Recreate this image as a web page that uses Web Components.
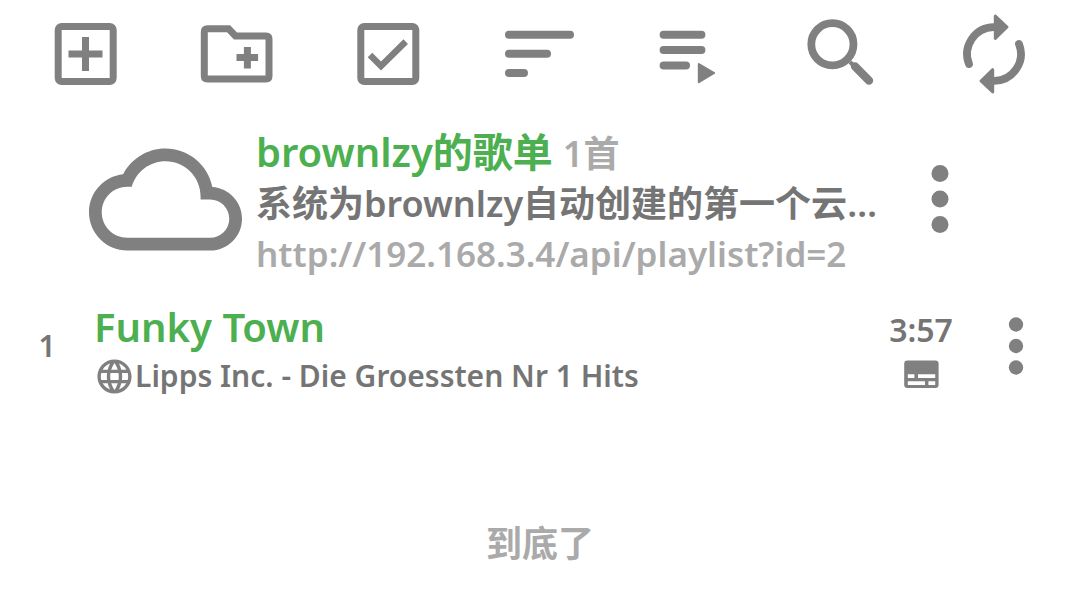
<!DOCTYPE html>
<html lang="zh-CN">
<head>
<meta charset="utf-8">
<meta name="viewport" content="width=device-width, initial-scale=1">
<title>brownlzy的歌单</title>
<style>
  body {
    margin: 0;
    background: #fff;
    color: #757575;
    font-family: "Noto Sans", "Noto Sans CJK SC", sans-serif;
    font-weight: 600;
  }
</style>
</head>
<body>
<playlist-page></playlist-page>

<script>
const ICONS = {
  add: ['0 0 82 82', `<g fill="none" stroke="currentColor" stroke-width="7"><rect x="13.2" y="13.4" width="55" height="55" rx="3.4"/><path d="M23.5 41h34M40.5 24v34"/></g>`],
  folder: ['0 0 82 82', `<g fill="none" stroke="currentColor" stroke-width="7"><path d="M11.5 15.8H32.6L39.5 23H70Q73 23 73 26V63Q73 66 70 66H11.5Q8.3 66 8.3 63V19Q8.3 15.8 11.5 15.8Z"/><path d="M40.5 44.6h21.6M51.4 34v21.4"/></g>`],
  check: ['0 0 82 82', `<g fill="none" stroke="currentColor" stroke-width="7"><rect x="12.8" y="13.4" width="55" height="55" rx="3.4"/><path stroke-width="6.4" d="M22 42 33 53 57.7 28.6"/></g>`],
  sort: ['0 0 82 82', `<path fill="none" stroke="currentColor" stroke-width="8" stroke-linecap="round" d="M10 21.7H71M10 40.8H48M10 60H25"/>`],
  queue: ['0 0 82 82', `<path fill="none" stroke="currentColor" stroke-width="8" stroke-linecap="round" d="M13.6 21.7H51.4M13.6 37H51.4M13.6 52.4H36"/><path fill="currentColor" stroke="currentColor" stroke-width="2" stroke-linejoin="round" d="M48.8 51 64.2 60 48.8 69.2Z"/>`],
  search: ['0 0 82 82', `<circle cx="30.4" cy="31.3" r="21.1" fill="none" stroke="currentColor" stroke-width="7.8"/><path d="M48 49 52.5 53.5" stroke="currentColor" stroke-width="4"/><path fill="none" stroke="currentColor" stroke-width="8.4" stroke-linecap="round" d="M53 53.4 67 67.6"/>`],
  refresh: ['0 0 82 82', `<g><path fill="none" stroke="currentColor" stroke-width="7.8" stroke-linecap="round" d="M42 14.1H40.7A27 27 0 0 0 16 51"/><path fill="currentColor" stroke="currentColor" stroke-width="3" stroke-linejoin="round" d="M42.3 3 54 14 42.3 25.3Z"/></g><g transform="rotate(180 41 41)"><path fill="none" stroke="currentColor" stroke-width="7.8" stroke-linecap="round" d="M42 14.1H40.7A27 27 0 0 0 16 51"/><path fill="currentColor" stroke="currentColor" stroke-width="3" stroke-linejoin="round" d="M42.3 3 54 14 42.3 25.3Z"/></g>`],
  cloud: ['0 0 24 24', `<path fill="currentColor" d="M19.35 10.04C18.67 6.59 15.64 4 12 4 9.11 4 6.6 5.64 5.35 8.04 2.34 8.36 0 10.91 0 14c0 3.31 2.69 6 6 6h13c2.76 0 5-2.24 5-5 0-2.64-2.05-4.78-4.65-4.96zM19 18H6c-2.21 0-4-1.79-4-4s1.79-4 4-4h.71C7.37 7.69 9.48 6 12 6c3.04 0 5.5 2.46 5.5 5.5v.5H19c1.66 0 3 1.34 3 3s-1.34 3-3 3z"/>`],
  more: ['0 0 24 24', `<g fill="currentColor"><circle cx="12" cy="6" r="2"/><circle cx="12" cy="12" r="2"/><circle cx="12" cy="18" r="2"/></g>`],
  globe: ['0 0 24 24', `<path fill="currentColor" d="M11.99 2C6.47 2 2 6.48 2 12s4.47 10 9.99 10C17.52 22 22 17.52 22 12S17.52 2 11.99 2zm6.93 6h-2.95c-.32-1.25-.78-2.45-1.38-3.56 1.84.63 3.37 1.91 4.33 3.56zM12 4.04c.83 1.2 1.48 2.53 1.91 3.96h-3.82c.43-1.43 1.08-2.76 1.91-3.96zM4.26 14C4.1 13.36 4 12.69 4 12s.1-1.36.26-2h3.38c-.08.66-.14 1.32-.14 2 0 .68.06 1.34.14 2H4.26zm.82 2h2.95c.32 1.25.78 2.45 1.38 3.56-1.84-.63-3.37-1.9-4.33-3.56zm2.95-8H5.08c.96-1.66 2.49-2.93 4.33-3.56C8.81 5.55 8.35 6.75 8.03 8zM12 19.96c-.83-1.2-1.48-2.53-1.91-3.96h3.82c-.43 1.43-1.08 2.76-1.91 3.96zM14.34 14H9.66c-.09-.66-.16-1.32-.16-2 0-.68.07-1.35.16-2h4.68c.09.65.16 1.32.16 2 0 .68-.07 1.34-.16 2zm.25 5.56c.6-1.11 1.06-2.31 1.38-3.56h2.95c-.96 1.65-2.49 2.93-4.33 3.56zM16.36 14c.08-.66.14-1.32.14-2 0-.68-.06-1.34-.14-2h3.38c.16.64.26 1.31.26 2s-.1 1.36-.26 2h-3.38z"/>`],
  lyrics: ['0 0 41 41', `<path fill="currentColor" fill-rule="evenodd" d="M6.4 6.6H34.4Q37.6 6.6 37.6 9.8V30.8Q37.6 34 34.4 34H6.4Q3.2 34 3.2 30.8V9.8Q3.2 6.6 6.4 6.6ZM6.8 20.2V24H13.4V20.2ZM17 20.2V24H34.2V20.2ZM6.8 27.2V31H24V27.2ZM27.4 27.2V31H34.2V27.2Z"/>`]
};

class UiIcon extends HTMLElement {
  connectedCallback() {
    const [box, shapes] = ICONS[this.getAttribute('name')];
    const root = this.shadowRoot || this.attachShadow({ mode: 'open' });
    root.innerHTML = `
      <style>
        :host { display: block; flex: none; width: var(--icon-size, 82px); height: var(--icon-size, 82px); color: #808080; }
        svg { display: block; width: 100%; height: 100%; }
      </style>
      <svg viewBox="${box}" aria-hidden="true">${shapes}</svg>`;
  }
}

class IconButton extends HTMLElement {
  connectedCallback() {
    const root = this.shadowRoot || this.attachShadow({ mode: 'open' });
    root.innerHTML = `
      <style>
        :host { display: flex; justify-content: center; align-items: center; }
        button { border: 0; padding: 0; background: none; cursor: pointer; }
      </style>
      <button type="button" aria-label="${this.getAttribute('label')}"><ui-icon name="${this.getAttribute('icon')}"></ui-icon></button>`;
  }
}

class PlaylistToolbar extends HTMLElement {
  connectedCallback() {
    const root = this.attachShadow({ mode: 'open' });
    root.innerHTML = `
      <style>
        :host { display: grid; grid-auto-flow: column; grid-auto-columns: 1fr; padding: 13px 10px; }
      </style>
      <icon-button icon="add" label="添加"></icon-button>
      <icon-button icon="folder" label="新建歌单"></icon-button>
      <icon-button icon="check" label="多选"></icon-button>
      <icon-button icon="sort" label="排序"></icon-button>
      <icon-button icon="queue" label="播放列表"></icon-button>
      <icon-button icon="search" label="搜索"></icon-button>
      <icon-button icon="refresh" label="刷新"></icon-button>`;
  }
}

class PlaylistHeader extends HTMLElement {
  connectedCallback() {
    const root = this.attachShadow({ mode: 'open' });
    root.innerHTML = `
      <style>
        :host { display: flex; align-items: center; gap: 14px; padding: 11px 89px 0; }
        .cover { --icon-size: 153px; }
        .text { flex: 1; min-width: 0; padding-top: 6px; }
        .name { display: flex; align-items: baseline; gap: 10px; }
        h1 { margin: 0; font-size: 40px; line-height: 54px; font-weight: inherit; color: #4caf50; }
        .count, .about { font-size: 36px; line-height: 50px; }
        .link { font-size: 35px; line-height: 50px; }
        .count, .link { color: #aaa; }
        .about, .link { white-space: nowrap; overflow: hidden; text-overflow: ellipsis; }
        icon-button { --icon-size: 102px; margin-left: -14px; }
      </style>
      <ui-icon class="cover" name="cloud"></ui-icon>
      <div class="text">
        <div class="name"><h1><slot name="name"></slot></h1><span class="count"><slot name="count"></slot></span></div>
        <div class="about"><slot name="about"></slot></div>
        <div class="link"><slot name="link"></slot></div>
      </div>
      <icon-button icon="more" label="歌单菜单"></icon-button>`;
  }
}

class SongRow extends HTMLElement {
  connectedCallback() {
    const root = this.attachShadow({ mode: 'open' });
    root.innerHTML = `
      <style>
        :host { display: flex; align-items: center; padding: 13px 21px 0 0; }
        .index { width: 94px; text-align: center; font-size: 30px; line-height: 48px; }
        .text { flex: 1; min-width: 0; padding-top: 10px; }
        .title { font-size: 40px; line-height: 50px; color: #4caf50; }
        .artist { display: flex; align-items: center; font-size: 30px; line-height: 48px; --icon-size: 41px; }
        .meta { display: flex; flex-direction: column; align-items: center; width: 104px; padding-top: 8px; font-size: 32px; line-height: 48px; --icon-size: 41px; }
        icon-button { --icon-size: 86px; }
      </style>
      <div class="index"><slot name="index"></slot></div>
      <div class="text">
        <div class="title"><slot name="title"></slot></div>
        <div class="artist"><ui-icon name="globe"></ui-icon><slot name="artist"></slot></div>
      </div>
      <div class="meta"><slot name="time"></slot><ui-icon name="lyrics"></ui-icon></div>
      <icon-button icon="more" label="歌曲菜单"></icon-button>`;
  }
}

class ListEnd extends HTMLElement {
  connectedCallback() {
    const root = this.attachShadow({ mode: 'open' });
    root.innerHTML = `
      <style>
        :host { display: block; padding: 118px 0 26px; text-align: center; font-size: 36px; line-height: 52px; color: #aaa; }
      </style>
      <slot></slot>`;
  }
}

class PlaylistPage extends HTMLElement {
  connectedCallback() {
    const root = this.attachShadow({ mode: 'open' });
    root.innerHTML = `
      <style>:host { display: block; }</style>
      <playlist-toolbar role="toolbar"></playlist-toolbar>
      <playlist-header>
        <span slot="name">brownlzy的歌单</span>
        <span slot="count">1首</span>
        <span slot="about">系统为brownlzy自动创建的第一个云端歌单</span>
        <span slot="link">http://192.168.3.4/api/playlist?id=2</span>
      </playlist-header>
      <song-row>
        <span slot="index">1</span>
        <span slot="title">Funky Town</span>
        <span slot="artist">Lipps Inc. - Die Groessten Nr 1 Hits</span>
        <span slot="time">3:57</span>
      </song-row>
      <list-end>到底了</list-end>`;
  }
}

customElements.define('ui-icon', UiIcon);
customElements.define('icon-button', IconButton);
customElements.define('playlist-toolbar', PlaylistToolbar);
customElements.define('playlist-header', PlaylistHeader);
customElements.define('song-row', SongRow);
customElements.define('list-end', ListEnd);
customElements.define('playlist-page', PlaylistPage);
</script>
</body>
</html>
